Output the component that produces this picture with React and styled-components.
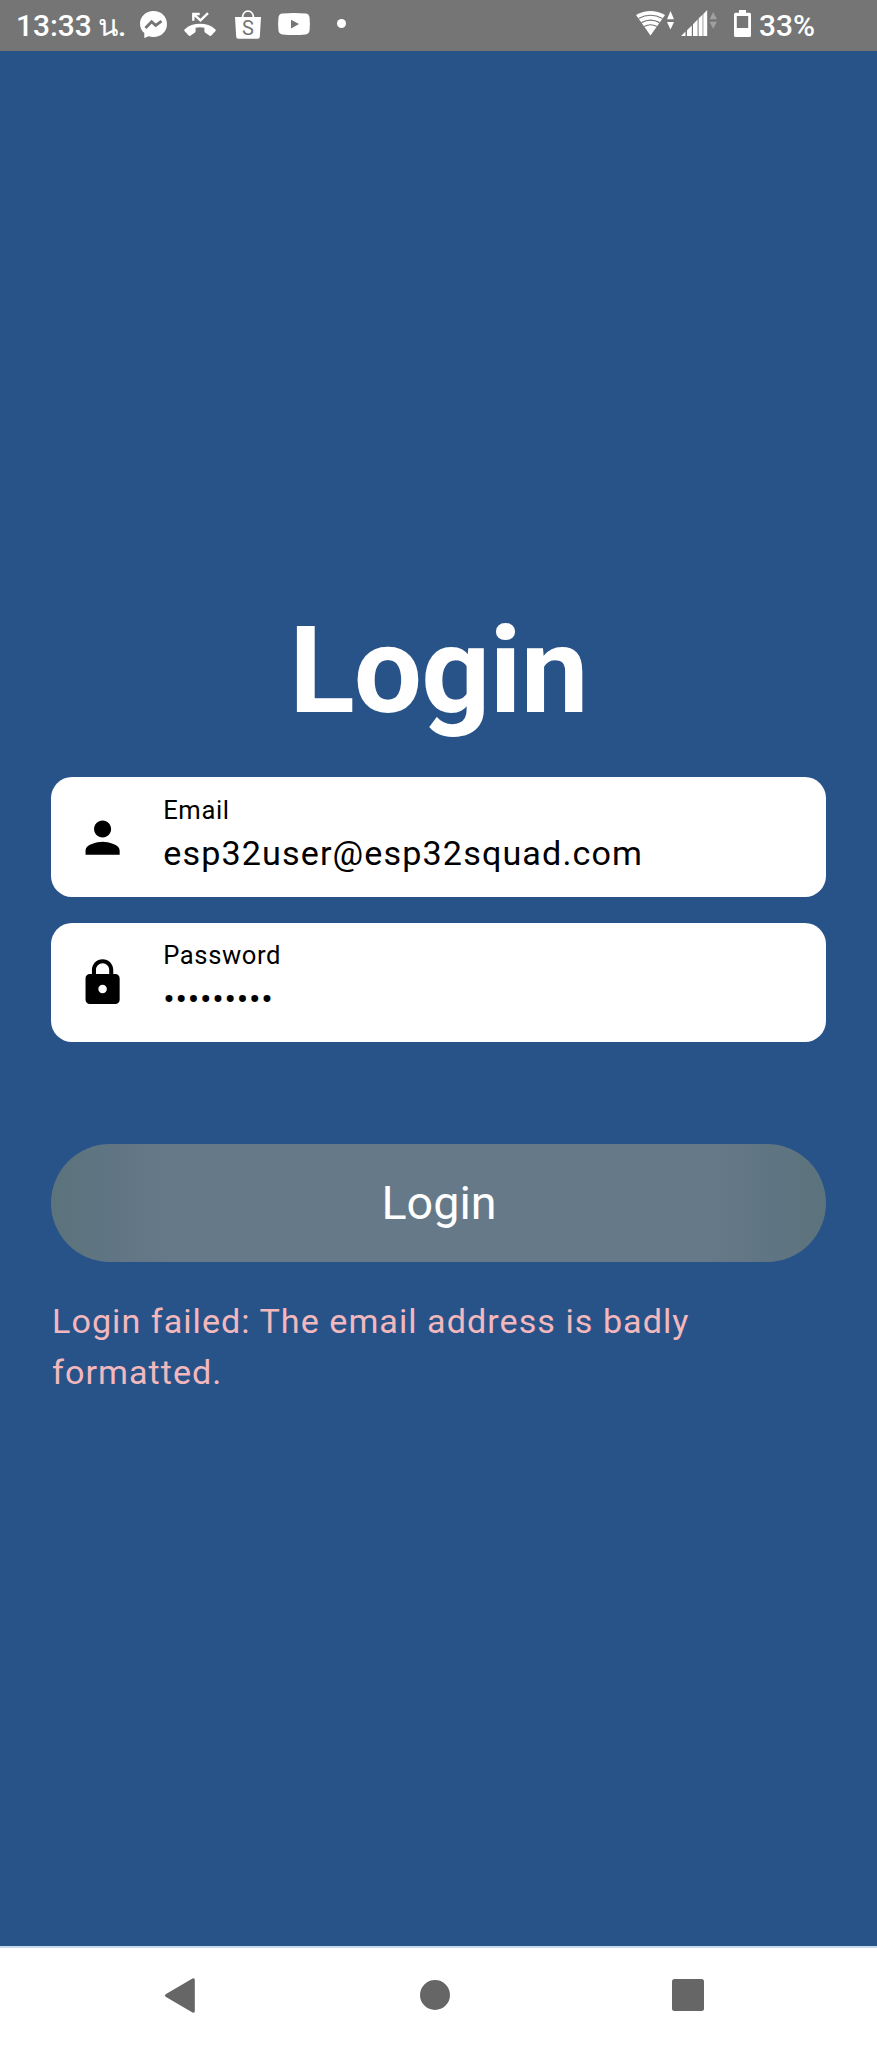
import React from "react";
import styled, { createGlobalStyle } from "styled-components";
import { MdPerson, MdLock } from "react-icons/md";

const GlobalStyle = createGlobalStyle`
  *, *::before, *::after { box-sizing: border-box; }
  html, body { margin: 0; padding: 0; }
  body {
    background: #285389;
    font-family: Roboto, "Noto Sans", "Liberation Sans", sans-serif;
    overflow: hidden;
  }
`;

const Screen = styled.div`
  width: 877px;
  height: 2048px;
  display: flex;
  flex-direction: column;
  background: #285389;
`;

const StatusBar = styled.header`
  height: 51px;
  flex: none;
  display: flex;
  justify-content: space-between;
  padding: 0 62px 0 16px;
  background: #757575;
  color: #fff;
`;

const StatusGroup = styled.div`
  display: flex;
  align-items: flex-start;
`;

const StatusText = styled.span`
  width: ${(p) => p.$width}px;
  margin-top: 8px;
  margin-left: ${(p) => p.$left || 0}px;
  font-size: 29.9px;
  line-height: 35px;
  font-weight: 500;
  white-space: nowrap;
`;

const Glyph = styled.svg`
  display: block;
  flex: none;
  width: ${(p) => p.$w}px;
  height: ${(p) => p.$h}px;
  margin-top: ${(p) => p.$top || 0}px;
  margin-left: ${(p) => p.$left || 0}px;
  fill: ${(p) => p.$color || "#fff"};
  overflow: visible;
`;

const Main = styled.main`
  flex: 1;
  display: flex;
  flex-direction: column;
  padding: 552px 51px 0;
`;

const Title = styled.h1`
  margin: 0 0 37.5px;
  font-size: 121px;
  line-height: 136.5px;
  font-weight: 700;
  letter-spacing: -0.8px;
  text-align: center;
  color: #fff;
`;

const Fields = styled.div`
  display: flex;
  flex-direction: column;
  gap: 26px;
`;

const Field = styled.div`
  height: 119.5px;
  display: flex;
  align-items: center;
  padding-left: 26px;
  background: #fff;
  border-radius: 21px;
  color: #000;

  > svg {
    width: 51.2px;
    height: 51.2px;
    flex: none;
    margin: 1px 35px 0 0;
  }
`;

const FieldText = styled.div`
  display: flex;
  flex-direction: column;
  gap: 0.7px;
  margin-top: -1.7px;
`;

const FieldLabel = styled.span`
  font-size: 25.6px;
  line-height: 34px;
  letter-spacing: 0.6px;
`;

const FieldValue = styled.span`
  font-size: 34.13px;
  line-height: 51.2px;
  letter-spacing: 1.12px;
`;

const MaskedValue = styled(FieldValue)`
  padding-top: 1px;
  margin-bottom: -1px;
  letter-spacing: 0.75px;
`;

const LoginButton = styled.button`
  height: 117.5px;
  margin: 102px 0 34px;
  padding: 0 0 0 1px;
  border: 0;
  border-radius: 59px;
  background: linear-gradient(90deg, #5b737c 0, #607583 60px, #667988 120px, #667988 calc(100% - 120px), #607583 calc(100% - 60px), #5b737c 100%);
  color: #fff;
  font: 400 46.7px/60px Roboto, sans-serif;
`;

const ErrorText = styled.p`
  margin: 0 0 0 1px;
  width: 700px;
  font-size: 34.13px;
  line-height: 51.2px;
  letter-spacing: 1.03px;
  color: #f2b8bd;
`;

const NavBar = styled.nav`
  flex: none;
  height: 102px;
  display: flex;
  padding-left: 165px;
  border-top: 2px solid #c9d9eb;
  background: #fff;
`;

export default function App() {
  return (
    <>
      <GlobalStyle />
      <Screen>
        <StatusBar>
          <StatusGroup>
            <StatusText $width={82}>13:33</StatusText>
            <StatusText $width={42}>น.</StatusText>
            <Glyph $w={27} $h={27} $top={11} viewBox="0 0 27 27">
              <path d="M13.500 0C5.900 0 0 5.500 0 12.700c0 3.800 1.600 7 4.300 9.300V26.300q0 .9.900.5l3.200-1.500c1.600.5 3.300.7 5.100.7 7.600 0 13.500-5.600 13.500-13.100S21.100 0 13.500 0z" />
              <path d="M5.500 17l6.100-6.300 4.100 3.700 5.800-4.200" fill="none" stroke="#757575" strokeWidth="2.800" />
            </Glyph>
            <Glyph $w={32} $h={25} $top={12} $left={17} viewBox="0 0 32 25">
              <path d="M.5 17.500C4.800 13.500 10.200 11.800 16 11.800s11.200 1.700 15.500 5.700q.8.800 0 1.600l-4.200 4.500q-.8.800-1.700.1l-4.600-3.300q-.7-.5-.6-1.300v-3.300q-4.400-1.300-8.800 0v3.300q.1.800-.6 1.300l-4.600 3.300q-.9.700-1.700-.1L.5 19.100q-.8-.8 0-1.600z" />
              <path d="M9.300 8.800V2h6.400M9.800 2.300l6.700 6 7.500-7.100" fill="none" stroke="#fff" strokeWidth="2.400" />
            </Glyph>
            <Glyph $w={26} $h={29} $top={10} $left={19} viewBox="0 0 26 29">
              <path d="M7.500 8C7.500 3.700 9.900 1.200 13 1.200S18.500 3.700 18.500 8" fill="none" stroke="#fff" strokeWidth="1.800" />
              <path d="M0 7h26l-1.200 19.800q-.1 1.900-2 1.900H3.200q-1.900 0-2-1.900z" />
              <text x="13" y="24.600" textAnchor="middle" fontFamily="Roboto" fontSize="20" fill="#757575">S</text>
            </Glyph>
            <Glyph $w={32} $h={22} $top={13} $left={17} viewBox="0 0 32 22">
              <path d="M4.500.6Q16-.5 27.500.6 31 .9 31.500 4.300q.9 6.700 0 13.400-.5 3.400-4 3.700-11.500 1.100-23 0-3.500-.3-4-3.700-.9-6.700 0-13.400Q1 .9 4.500.6z" />
              <path d="M13 6.700v8.800l8-4.400z" fill="#757575" />
            </Glyph>
            <Glyph $w={9} $h={9} $top={19} $left={27} viewBox="0 0 9 9">
              <circle cx="4.500" cy="4.500" r="4.500" />
            </Glyph>
          </StatusGroup>
          <StatusGroup>
            <Glyph $w={39} $h={25} $top={11} viewBox="0 0 39 25">
              <path d="M0 4Q14.500-4 29 4L14.500 24.500z" />
              <g fill="none" stroke="#757575" strokeWidth="1.200">
                <path d="M2.500 7.600q12-6.700 24 0M5.400 11.600q9.100-5 18.200 0M8.200 15.500q6.300-3.500 12.600 0" />
              </g>
              <path d="M31 8.200h7L34.500 0zM31 11h7l-3.500 7.500z" />
            </Glyph>
            <Glyph $w={36} $h={26} $top={10} $left={6} viewBox="0 0 36 26">
              <path d="M0 26l4.500-4.500V26zM6 20.200l4.800-4.800V26H6zM12 14.200l4.600-4.600V26H12zM17.600 8.600L21.600 4.600V26h-4zM22.300 3.900L26.200 0v26h-3.900z" />
              <path d="M28.500 9.200H36L32.200 2zM28.500 11.800H36l-3.800 7z" fill="#a0a0a0" />
            </Glyph>
            <Glyph $w={17} $h={27} $top={10} $left={17} viewBox="0 0 17 27">
              <path fillRule="evenodd" d="M5 0h7v2.800h3.500q1.500 0 1.500 1.500v21.200q0 1.500-1.500 1.500h-14Q0 27 0 25.500V4.300q0-1.500 1.500-1.500H5zM2.800 6v12h11.400V6z" />
            </Glyph>
            <StatusText $width={56} $left={8}>33%</StatusText>
          </StatusGroup>
        </StatusBar>

        <Main>
          <Title>Login</Title>
          <Fields>
            <Field>
              <MdPerson />
              <FieldText>
                <FieldLabel>Email</FieldLabel>
                <FieldValue>esp32user@esp32squad.com</FieldValue>
              </FieldText>
            </Field>
            <Field>
              <MdLock />
              <FieldText>
                <FieldLabel>Password</FieldLabel>
                <MaskedValue>•••••••••</MaskedValue>
              </FieldText>
            </Field>
          </Fields>
          <LoginButton type="button">Login</LoginButton>
          <ErrorText>Login failed: The email address is badly formatted.</ErrorText>
        </Main>

        <NavBar>
          <Glyph $w={30} $h={35} $top={30} $color="#666" viewBox="0 0 30 35">
            <path d="M.6 16.300L27.500.5Q29.800-.4 29.800 2v31q0 2.400-2.300 1.500L.6 18.700Q-.8 17.500.6 16.300z" />
          </Glyph>
          <Glyph $w={30} $h={30} $top={32} $left={225} $color="#666" viewBox="0 0 30 30">
            <circle cx="15" cy="15" r="15" />
          </Glyph>
          <Glyph $w={32} $h={32} $top={31} $left={222} $color="#666" viewBox="0 0 32 32">
            <rect width="32" height="32" rx="2.500" />
          </Glyph>
        </NavBar>
      </Screen>
    </>
  );
}
